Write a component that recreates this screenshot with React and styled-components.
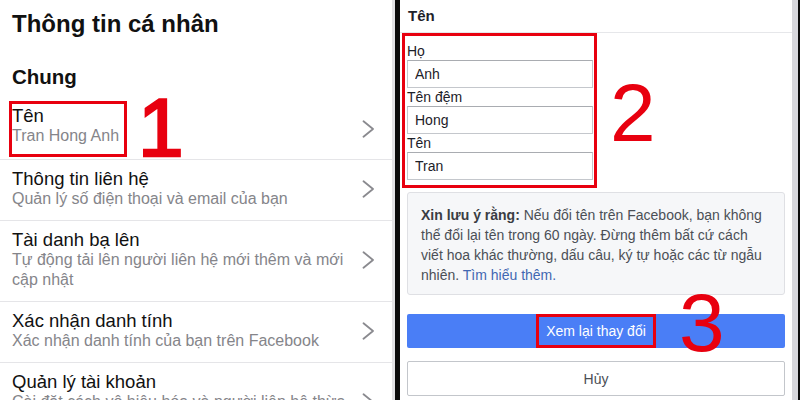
import React from "react";
import styled, { createGlobalStyle } from "styled-components";

const Global = createGlobalStyle`
  html, body { margin: 0; padding: 0; background: #fff; }
  body { font-family: "Liberation Sans", Arial, sans-serif; }
  * { box-sizing: border-box; }
`;

const Frame = styled.div`
  width: 800px;
  height: 400px;
  display: flex;
  overflow: hidden;
  background: #fff;
`;

const LeftPane = styled.section`
  position: relative;
  flex: 0 0 395px;
  height: 400px;
  overflow: hidden;
  background: #fff;
  border-right: 3px solid #e2e2e5;
`;

const RightPane = styled.section`
  position: relative;
  flex: 0 0 398px;
  height: 400px;
  overflow: hidden;
  background: #fff;
  border-right: 6px solid #d7d7dc;
`;

const BlackRule = styled.div`
  flex: 0 0 ${(p) => p.$w}px;
  height: 400px;
  background: #0b0b0b;
`;

/* ---------- left: settings list ---------- */

const PageTitle = styled.h1`
  margin: 9px 0 0 12px;
  font-size: 24px;
  line-height: 30px;
  font-weight: 700;
  color: #111;
`;

const SectionTitle = styled.h2`
  margin: 25px 0 9px 12px;
  font-size: 20.5px;
  line-height: 26px;
  font-weight: 700;
  color: #111;
`;

const Row = styled.div`
  display: flex;
  align-items: center;
  justify-content: space-between;
  padding: ${(p) => (p.$tight ? "2px 17px 2px 9px" : "9px 17px 11px 12px")};
  border-bottom: 1px solid #e5e5e8;
`;

const RowText = styled.div`
  flex: 1;
  min-width: 0;
  padding-right: 14px;
`;

const NameBox = styled.div`
  width: 118px;
  border: 3px solid #e8000f;
  padding: 2px 4px 8px 0;
`;

const RowTitle = styled.div`
  font-size: 18.5px;
  line-height: 20px;
  color: #111;
`;

const RowSub = styled.div`
  font-size: 16px;
  line-height: 20px;
  color: #85858a;
`;

const Chevron = styled.svg`
  flex: 0 0 auto;
  width: 13px;
  height: 18px;
`;

const StepNumber = styled.span`
  position: absolute;
  left: ${(p) => p.$x}px;
  top: ${(p) => p.$y}px;
  font-size: 82px;
  line-height: 82px;
  font-weight: 400;
  color: #e8000f;
  z-index: 2;
  pointer-events: none;
  ${(p) => (p.$heavy ? "-webkit-text-stroke: 2.5px #e8000f;" : "")}
`;

/* ---------- right: name form ---------- */

const FormHeader = styled.header`
  height: 33px;
  padding-left: 8px;
  border-bottom: 1px solid #e6e7ea;
  font-size: 15px;
  line-height: 32px;
  font-weight: 700;
  color: #1d2129;
`;

const FormBody = styled.div`
  display: flex;
  flex-direction: column;
  padding: 0 7px;
`;

const FieldBox = styled.div`
  width: 195px;
  margin-left: -5px;
  border: 3px solid #e8000f;
  padding: 6px 1px 5px 2px;
`;

const FieldLabel = styled.label`
  display: block;
  font-size: 14px;
  line-height: 18px;
  color: #1d2129;
`;

const FieldInput = styled.input`
  display: block;
  width: 100%;
  height: 28px;
  margin: 0;
  padding: 0 7px;
  border: 1px solid #c4c7cc;
  border-top-color: #a9acb1;
  border-radius: 0;
  background: #fff;
  font-family: "Liberation Sans", Arial, sans-serif;
  font-size: 14px;
  color: #1d2129;
  outline: none;
`;

const Notice = styled.p`
  margin: 4px 0 0;
  padding: 12px 12px 9px 13px;
  border: 1px solid #dfe0e4;
  border-radius: 3px;
  background: #f6f7f9;
  font-size: 14px;
  line-height: 20px;
  color: #4b4f56;
  white-space: nowrap;
`;

const NoticeStrong = styled.strong`
  color: #3a3d43;
`;

const NoticeLink = styled.a`
  color: #4267b2;
  text-decoration: none;
`;

const PrimaryButton = styled.button`
  display: flex;
  justify-content: center;
  align-items: stretch;
  height: 34px;
  margin-top: 19px;
  padding: 0;
  border: none;
  border-radius: 2px;
  background: #4a7ef6;
  font-family: "Liberation Sans", Arial, sans-serif;
`;

const HighlightLabel = styled.span`
  display: flex;
  align-items: center;
  padding: 0 7px;
  border: 3px solid #e8000f;
  font-size: 14px;
  color: #fff;
`;

const SecondaryButton = styled.button`
  height: 35px;
  margin-top: 13px;
  border: 1px solid #c3c6cb;
  border-radius: 2px;
  background: #fff;
  font-family: "Liberation Sans", Arial, sans-serif;
  font-size: 14px;
  color: #4b4f56;
`;

const ChevronIcon = () => (
  <Chevron viewBox="0 0 13 18" fill="none">
    <path d="M1.5 1.2 L11 9 L1.5 16.8" stroke="#8a8a8f" strokeWidth="1.8" strokeLinecap="round" strokeLinejoin="round" />
  </Chevron>
);

const rows = [
  { title: "Thông tin liên hệ", sub: "Quản lý số điện thoại và email của bạn" },
  { title: "Tài danh bạ lên", sub: "Tự động tải lên người liên hệ mới thêm và mới cập nhật" },
  { title: "Xác nhận danh tính", sub: "Xác nhận danh tính của bạn trên Facebook" },
  { title: "Quản lý tài khoản", sub: "Cài đặt cách vô hiệu hóa và người liên hệ thừa kế" },
];

const fields = [
  { label: "Họ", value: "Anh" },
  { label: "Tên đệm", value: "Hong" },
  { label: "Tên", value: "Tran" },
];

export default function App() {
  return (
    <>
      <Global />
      <Frame>
        <LeftPane>
          <PageTitle>Thông tin cá nhân</PageTitle>
          <SectionTitle>Chung</SectionTitle>
          <Row $tight>
            <NameBox>
              <RowTitle>Tên</RowTitle>
              <RowSub>Tran Hong Anh</RowSub>
            </NameBox>
            <ChevronIcon />
          </Row>
          {rows.map((r) => (
            <Row key={r.title}>
              <RowText>
                <RowTitle>{r.title}</RowTitle>
                <RowSub>{r.sub}</RowSub>
              </RowText>
              <ChevronIcon />
            </Row>
          ))}
          <StepNumber $x={138} $y={87} $heavy>1</StepNumber>
        </LeftPane>
        <BlackRule $w={5} />
        <RightPane>
          <FormHeader>Tên</FormHeader>
          <FormBody>
            <FieldBox>
              {fields.map((f) => (
                <div key={f.label}>
                  <FieldLabel>{f.label}</FieldLabel>
                  <FieldInput readOnly defaultValue={f.value} />
                </div>
              ))}
            </FieldBox>
            <Notice>
              <NoticeStrong>Xin lưu ý rằng:</NoticeStrong> Nếu đổi tên trên Facebook, bạn không
              <br />
              thể đổi lại tên trong 60 ngày. Đừng thêm bất cứ cách
              <br />
              viết hoa khác thường, dấu câu, ký tự hoặc các từ ngẫu
              <br />
              nhiên. <NoticeLink href="#">Tìm hiểu thêm.</NoticeLink>
            </Notice>
            <PrimaryButton type="button">
              <HighlightLabel>Xem lại thay đổi</HighlightLabel>
            </PrimaryButton>
            <SecondaryButton type="button">Hủy</SecondaryButton>
          </FormBody>
          <StepNumber $x={210} $y={72}>2</StepNumber>
          <StepNumber $x={279} $y={282}>3</StepNumber>
        </RightPane>
        <BlackRule $w={2} />
      </Frame>
    </>
  );
}
